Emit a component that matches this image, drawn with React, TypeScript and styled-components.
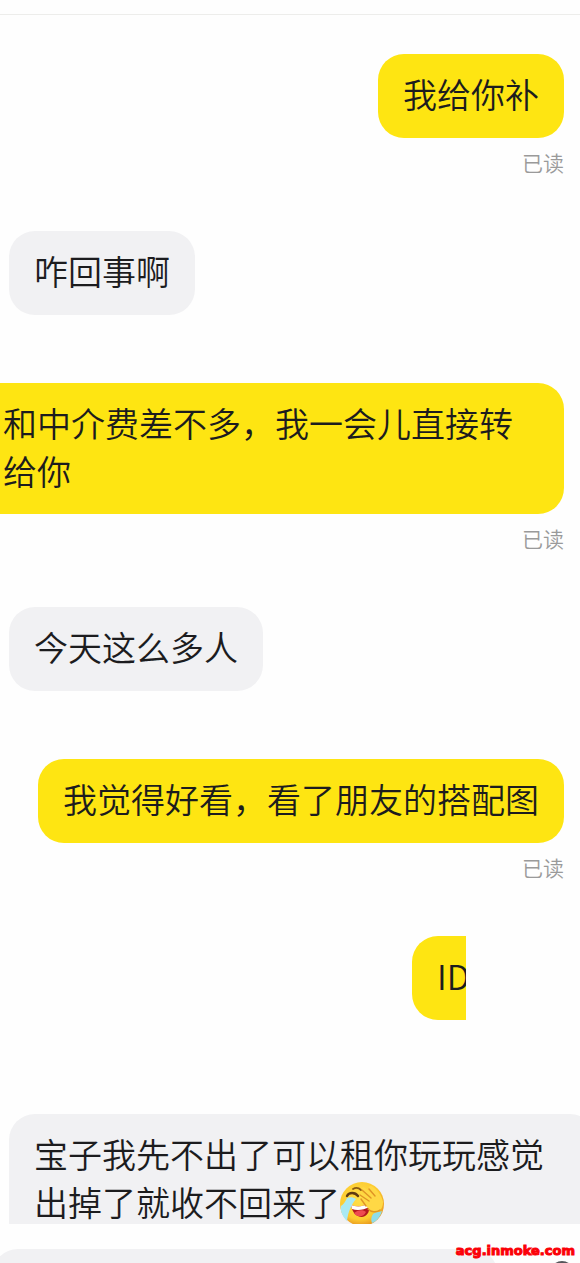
import React from "react";
import styled, { createGlobalStyle } from "styled-components";

const GlobalStyle = createGlobalStyle`
  * { box-sizing: border-box; }
  body {
    margin: 0;
    background: #fefefe;
    font-family: "Noto Sans CJK SC", sans-serif;
    color: #1c1c1e;
  }
`;

const Screen = styled.main`
  position: relative;
  overflow: hidden;
`;

const TopBar = styled.header`
  height: 15px;
  border-bottom: 1px solid #ededeb;
`;

const Thread = styled.section`
  display: flex;
  flex-direction: column;
  padding: 39px 16px 0 9px;
`;

const Message = styled.article<{ $mine?: boolean }>`
  display: flex;
  flex-direction: column;
  align-items: ${(p) => (p.$mine ? "flex-end" : "flex-start")};
  padding-bottom: ${(p) => (p.$mine ? "53px" : "68px")};
`;

const Bubble = styled.p<{ $mine?: boolean; $bleed?: "left" | "right" }>`
  margin: 0;
  padding: 16px 25px 20px;
  border-radius: 26px;
  font-size: 34px;
  font-weight: 350;
  line-height: 48px;
  background: ${(p) => (p.$mine ? "#fee512" : "#f1f1f3")};
  ${(p) =>
    p.$bleed === "left" &&
    "align-self: stretch; margin-left: -9px; padding: 16px 50px 19px 3px; border-top-left-radius: 0; border-bottom-left-radius: 0;"}
  ${(p) => p.$bleed === "right" && "margin-right: -16px; padding-right: 45px;"}
`;

const ReadMark = styled.span`
  height: 40px;
  padding-top: 9px;
  font-size: 21px;
  font-weight: 350;
  line-height: 30px;
  color: #9a9a9a;
`;

const CutBubble = styled.div`
  display: flex;
  width: 54px;
  margin-right: 98px;
  overflow: hidden;
  white-space: nowrap;

  ${Bubble} {
    flex: 0 0 auto;
    padding-right: 40px;
  }
`;

const CutMessage = styled(Message)`
  padding-bottom: 94px;
`;

const Latest = styled.div`
  height: 110px;
  overflow: hidden;
  margin-right: -16px;
`;

const Emoji = styled.svg`
  width: 46px;
  height: 46px;
  margin-left: -1px;
  vertical-align: -11px;
`;

const Footer = styled.footer`
  display: flex;
  align-items: flex-start;
  justify-content: space-between;
  height: 39px;
  padding: 25px 6px 0 0;
  overflow: hidden;
`;

const NextBubble = styled.div`
  flex: 0 1 506px;
  height: 60px;
  margin-left: -8px;
  border-radius: 26px;
  background: #f1f1f3;
`;

const Avatar = styled.div`
  width: 24px;
  height: 24px;
  margin-top: 12px;
  border-radius: 12px;
  background: #55555a;
`;

const Watermark = styled.a`
  position: absolute;
  right: 5px;
  bottom: 2px;
  font-family: "DejaVu Sans", sans-serif;
  font-size: 13px;
  font-weight: 700;
  line-height: 20px;
  color: #fb0007;
  -webkit-text-stroke: 1px #fb0007;
  text-decoration: none;
`;

function LaughCry() {
  return (
    <Emoji viewBox="0 0 46 46" role="img" aria-label="笑哭">
      <defs>
        <radialGradient id="face" cx="45%" cy="40%" r="60%">
          <stop offset="0" stopColor="#ffe04a" />
          <stop offset="0.75" stopColor="#fdcb30" />
          <stop offset="1" stopColor="#e8981f" />
        </radialGradient>
      </defs>
      <circle cx="23" cy="23" r="22" fill="url(#face)" />
      <path d="M12 24c5 2 11 2 17-1 3 6 0 12-6 13-6 0-10-5-11-12z" fill="#b3191f" />
      <path d="M12 24c5 2 11 2 17-1l1 3c-5 3-12 4-17 2z" fill="#fff" />
      <path d="M15 32c3-3 9-4 12-1-2 5-9 6-12 1z" fill="#ee4a50" />
      <path d="M14 8c3-2 6-1 8 1" fill="none" stroke="#8a5a14" strokeWidth="1.8" strokeLinecap="round" />
      <path d="M8 15c2-4 8-4 11 0" fill="none" stroke="#5f3a12" strokeWidth="2.4" strokeLinecap="round" />
      <path d="M8 17c3-1 6-1 9 1-5 6-8 13-9 22-4-4-7-9-6-15 3-2 4-4 6-8z" fill="#a9e9f3" />
      <path d="M33 35c1-3 4-4 7-4l3-1c-2 6-5 10-10 12-1-2-1-5 0-7z" fill="#8edde9" />
      <path
        d="M21 15c-1-2 1-3 3-2l5 3-6-7c-1-2 1-4 3-2l7 6-3-5c-1-3 2-4 4-2 5 4 9 9 10 15 0 6-3 10-8 10-4 0-6-3-9-6l-5-5c-2-2 0-3 1-3l4 1z"
        fill="#ffd845"
      />
      <path
        d="M29 28c3 3 8 4 12 1M22 18l5 7M21 14l9 6M23 9l9 8M30 8l6 7"
        fill="none"
        stroke="#e09425"
        strokeWidth="1.4"
        strokeLinecap="round"
      />
    </Emoji>
  );
}

export default function App() {
  return (
    <Screen>
      <GlobalStyle />
      <TopBar />
      <Thread>
        <Message $mine>
          <Bubble $mine>我给你补</Bubble>
          <ReadMark>已读</ReadMark>
        </Message>
        <Message>
          <Bubble>咋回事啊</Bubble>
        </Message>
        <Message $mine>
          <Bubble $mine $bleed="left">和中介费差不多，我一会儿直接转给你</Bubble>
          <ReadMark>已读</ReadMark>
        </Message>
        <Message>
          <Bubble>今天这么多人</Bubble>
        </Message>
        <Message $mine>
          <Bubble $mine>我觉得好看，看了朋友的搭配图</Bubble>
          <ReadMark>已读</ReadMark>
        </Message>
        <CutMessage $mine>
          <CutBubble>
            <Bubble $mine>ID</Bubble>
          </CutBubble>
        </CutMessage>
        <Latest>
          <Bubble $bleed="right">
            宝子我先不出了可以租你玩玩感觉出掉了就收不回来了
            <LaughCry />
          </Bubble>
        </Latest>
      </Thread>
      <Footer>
        <NextBubble />
        <Avatar />
      </Footer>
      <Watermark href="#">acg.inmoke.com</Watermark>
    </Screen>
  );
}
